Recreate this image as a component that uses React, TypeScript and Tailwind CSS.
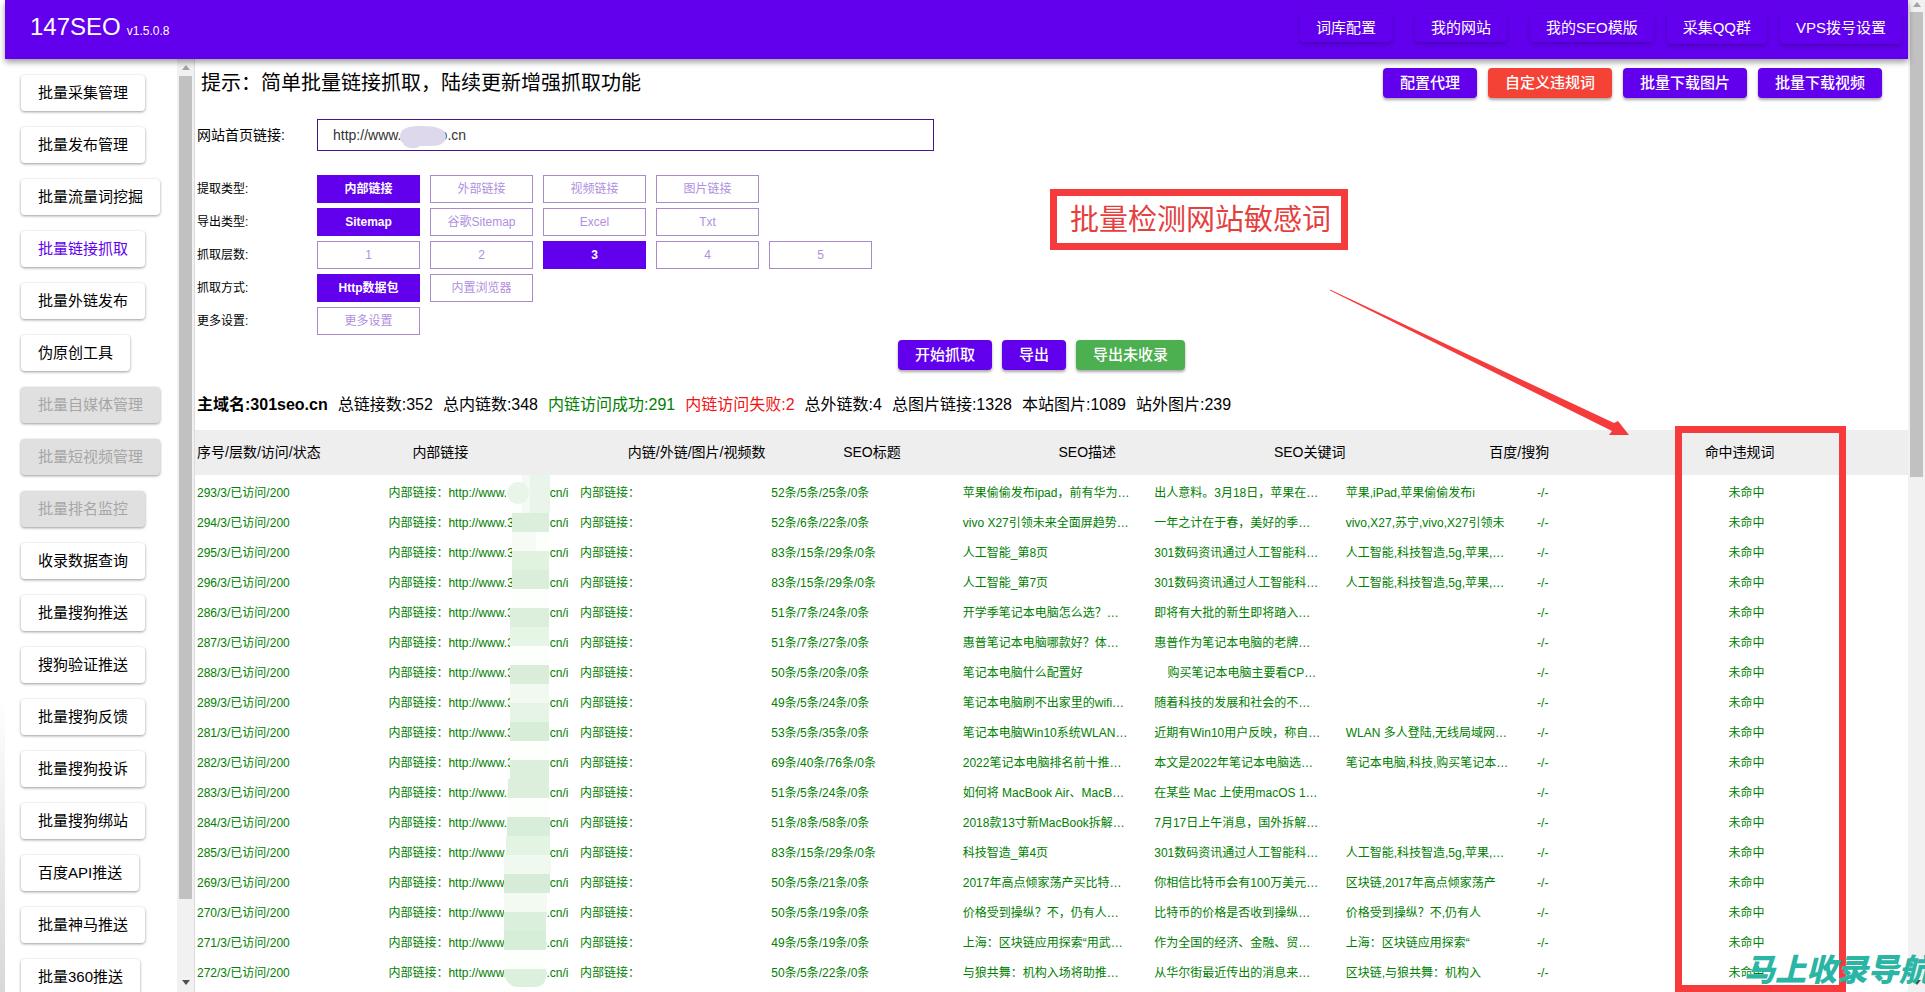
import { useState } from "react";
import clsx from "clsx";

const navItems = [
  { label: "词库配置", className: "h-7 mr-[23px]" },
  { label: "我的网站", className: "h-7 mr-[23px]" },
  { label: "我的SEO模版", className: "h-7 mr-[13px]" },
  { label: "采集QQ群", className: "h-8 mr-[13px]" },
  { label: "VPS拨号设置", className: "h-8" },
];

const menuItems = [
  { label: "批量采集管理" },
  { label: "批量发布管理" },
  { label: "批量流量词挖掘" },
  { label: "批量链接抓取", active: true },
  { label: "批量外链发布" },
  { label: "伪原创工具" },
  { label: "批量自媒体管理", disabled: true },
  { label: "批量短视频管理", disabled: true },
  { label: "批量排名监控", disabled: true },
  { label: "收录数据查询" },
  { label: "批量搜狗推送" },
  { label: "搜狗验证推送" },
  { label: "批量搜狗反馈" },
  { label: "批量搜狗投诉" },
  { label: "批量搜狗绑站" },
  { label: "百度API推送" },
  { label: "批量神马推送" },
  { label: "批量360推送" },
];

const optionGroups = [
  { label: "提取类型:", options: ["内部链接", "外部链接", "视频链接", "图片链接"], selected: "内部链接" },
  { label: "导出类型:", options: ["Sitemap", "谷歌Sitemap", "Excel", "Txt"], selected: "Sitemap" },
  { label: "抓取层数:", options: ["1", "2", "3", "4", "5"], selected: "3" },
  { label: "抓取方式:", options: ["Http数据包", "内置浏览器"], selected: "Http数据包" },
  { label: "更多设置:", options: ["更多设置"], selected: "" },
];

const columns = [
  "序号/层数/访问/状态",
  "内部链接",
  "内链/外链/图片/视频数",
  "SEO标题",
  "SEO描述",
  "SEO关键词",
  "百度/搜狗",
  "命中违规词",
];

// [id, counts, title, description, keywords]
const rows = [
  ["293", "52条/5条/25条/0条", "苹果偷偷发布ipad，前有华为…", "出人意料。3月18日，苹果在…", "苹果,iPad,苹果偷偷发布i"],
  ["294", "52条/6条/22条/0条", "vivo X27引领未来全面屏趋势…", "一年之计在于春，美好的季…", "vivo,X27,苏宁,vivo,X27引领未"],
  ["295", "83条/15条/29条/0条", "人工智能_第8页", "301数码资讯通过人工智能科…", "人工智能,科技智造,5g,苹果,…"],
  ["296", "83条/15条/29条/0条", "人工智能_第7页", "301数码资讯通过人工智能科…", "人工智能,科技智造,5g,苹果,…"],
  ["286", "51条/7条/24条/0条", "开学季笔记本电脑怎么选？…", "即将有大批的新生即将踏入…", ""],
  ["287", "51条/7条/27条/0条", "惠普笔记本电脑哪款好？体…", "惠普作为笔记本电脑的老牌…", ""],
  ["288", "50条/5条/20条/0条", "笔记本电脑什么配置好", "\u00a0\u00a0\u00a0\u00a0购买笔记本电脑主要看CP…", ""],
  ["289", "49条/5条/24条/0条", "笔记本电脑刷不出家里的wifi…", "随着科技的发展和社会的不…", ""],
  ["281", "53条/5条/35条/0条", "笔记本电脑Win10系统WLAN…", "近期有Win10用户反映，称自…", "WLAN 多人登陆,无线局域网…"],
  ["282", "69条/40条/76条/0条", "2022笔记本电脑排名前十推…", "本文是2022年笔记本电脑选…", "笔记本电脑,科技,购买笔记本…"],
  ["283", "51条/5条/24条/0条", "如何将 MacBook Air、MacB…", "在某些 Mac 上使用macOS 1…", ""],
  ["284", "51条/8条/58条/0条", "2018款13寸新MacBook拆解…", "7月17日上午消息，国外拆解…", ""],
  ["285", "83条/15条/29条/0条", "科技智造_第4页", "301数码资讯通过人工智能科…", "人工智能,科技智造,5g,苹果,…"],
  ["269", "50条/5条/21条/0条", "2017年高点倾家荡产买比特…", "你相信比特币会有100万美元…", "区块链,2017年高点倾家荡产"],
  ["270", "50条/5条/19条/0条", "价格受到操纵？不，仍有人…", "比特币的价格是否收到操纵…", "价格受到操纵？不,仍有人"],
  ["271", "49条/5条/19条/0条", "上海：区块链应用探索“用武…", "作为全国的经济、金融、贸…", "上海：区块链应用探索“"],
  ["272", "50条/5条/22条/0条", "与狼共舞：机构入场将助推…", "从华尔街最近传出的消息来…", "区块链,与狼共舞：机构入"],
];

// blocks that hide the domain in the link column: [x, y, width, height, colour]
const mosaic: [number, number, number, number, string][] = [
  [2, 0, 40, 38, "#ffffff"],
  [18, 0, 8, 38, "#f3faf3"],
  [26, 0, 20, 38, "#e9f5e9"],
  [8, 38, 37, 19, "#dcefdc"],
  [8, 57, 37, 19, "#fdfffd"],
  [8, 57, 24, 19, "#f6fbf6"],
  [8, 76, 37, 19, "#e1f2e1"],
  [8, 95, 37, 19, "#daeeda"],
  [8, 114, 37, 19, "#fdfffd"],
  [6, 133, 39, 19, "#dceedc"],
  [6, 152, 39, 19, "#e6f5e6"],
  [6, 171, 39, 19, "#fdfffd"],
  [6, 190, 39, 19, "#d9edd9"],
  [6, 209, 39, 19, "#f1f9f1"],
  [6, 228, 39, 19, "#e6f4e6"],
  [6, 247, 39, 19, "#d8edd8"],
  [6, 266, 39, 19, "#fdfffd"],
  [6, 285, 39, 19, "#dbefdc"],
  [4, 304, 41, 19, "#dbefdc"],
  [4, 323, 41, 19, "#fdfffd"],
  [3, 342, 43, 19, "#d9eddb"],
  [2, 361, 44, 19, "#e4f4e4"],
  [0, 380, 47, 19, "#eff9ef"],
  [0, 399, 46, 19, "#d6ecd9"],
  [0, 418, 43, 19, "#f2faf2"],
  [0, 437, 42, 19, "#dbefdd"],
  [0, 456, 42, 19, "#d6edd8"],
  [0, 475, 42, 19, "#fdfffd"],
];

function ScrollArrow({ down = false, className = "" }: { down?: boolean; className?: string }) {
  return (
    <svg viewBox="0 0 8 5" className={clsx("w-2 h-[5px] shrink-0", className)}>
      <path d={down ? "M0 0h8L4 5z" : "M0 5h8L4 0z"} fill={down ? "#505050" : "#a3a3a3"} />
    </svg>
  );
}

function ActionButton({ label, color = "bg-[#6200ee]" }: { label: string; color?: string }) {
  return (
    <button
      type="button"
      className={clsx(
        "h-[30px] px-[17px] rounded text-white text-[15px] font-medium whitespace-nowrap shadow-[0_2px_3px_rgba(0,0,0,0.35)]",
        color
      )}
    >
      {label}
    </button>
  );
}

function Header() {
  return (
    <header className="relative z-10 flex items-center justify-between h-[59px] shrink-0 pl-[25px] pr-[6px] bg-[#6200ee] text-white shadow-[0_3px_6px_rgba(0,0,0,0.4)]">
      <h1 className="flex items-baseline gap-1.5 text-2xl pb-1.5">
        147SEO <small className="text-xs">v1.5.0.8</small>
      </h1>
      <nav className="flex items-center pb-[3px]">
        {navItems.map((item) => (
          <button
            key={item.label}
            type="button"
            className={clsx(
              "px-4 rounded text-[15px] whitespace-nowrap shadow-[0_2px_4px_rgba(0,0,0,0.25)]",
              item.className
            )}
          >
            {item.label}
          </button>
        ))}
      </nav>
    </header>
  );
}

function Sidebar() {
  return (
    <aside className="flex w-[190px] shrink-0 overflow-hidden">
      <nav className="flex flex-col items-start flex-1 gap-4 pt-4 pl-4">
        {menuItems.map((item) => (
          <button
            key={item.label}
            type="button"
            disabled={item.disabled}
            className={clsx(
              "h-9 shrink-0 px-[17px] rounded text-[15px] whitespace-nowrap shadow-[0_1px_3px_rgba(0,0,0,0.4)]",
              item.disabled ? "bg-[#e0e0e0] text-[#a6a6a6]" : "bg-white",
              item.active ? "text-[#6200ee]" : !item.disabled && "text-black"
            )}
          >
            {item.label}
          </button>
        ))}
      </nav>
      <div className="flex flex-col items-center w-[18px] shrink-0 bg-[#f1f1f1] border-r border-[#dcdcdc]">
        <ScrollArrow className="mt-[6px] mb-[6px]" />
        <div className="flex-1 w-[13px]">
          <div className="h-[91%] bg-[#c1c1c1]" />
        </div>
        <ScrollArrow down className="mb-[7px]" />
      </div>
    </aside>
  );
}

function OptionRow({ label, options, selected }: { label: string; options: string[]; selected: string }) {
  const [value, setValue] = useState(selected);
  return (
    <div role="group" aria-label={label} className="flex items-center">
      <span className="w-[120px] text-xs">{label}</span>
      <div className="flex gap-[10px]">
        {options.map((option) => (
          <button
            key={option}
            type="button"
            aria-pressed={value === option}
            onClick={() => setValue(option)}
            className={clsx(
              "w-[103px] h-7 border text-xs",
              value === option
                ? "bg-[#6200ee] border-[#6200ee] text-white font-bold"
                : "bg-white border-[#a98bc9] text-[#b08fe0]"
            )}
          >
            {option}
          </button>
        ))}
      </div>
    </div>
  );
}

function ResultTable() {
  return (
    <div className="relative">
      <table className="block -mr-3 whitespace-nowrap">
        <thead className="block bg-[#eeeeee] pl-0.5">
          <tr className="grid grid-cols-8 h-[45px] items-center pb-0.5 text-sm">
            {columns.map((column) => (
              <th key={column} className="text-left font-normal">
                {column}
              </th>
            ))}
          </tr>
        </thead>
        <tbody className="block pt-[3px] pl-0.5 text-xs text-[#008000]">
          {rows.map(([id, counts, title, description, keywords]) => (
            <tr key={id} className="grid grid-cols-9 h-[30px] items-center">
              <td>{id}/3/已访问/200</td>
              <td>内部链接：http://www.301seo.cn/i</td>
              <td>内部链接：</td>
              <td>{counts}</td>
              <td>{title}</td>
              <td>{description}</td>
              <td>{keywords}</td>
              <td>-/-</td>
              <td>未命中</td>
            </tr>
          ))}
        </tbody>
      </table>
      {/* Domain mask */}
      <svg viewBox="0 0 47 512" className="absolute top-[45px] left-[309px] w-[47px] h-[512px]">
        {mosaic.map(([x, y, width, height, fill]) => (
          <rect key={x + "-" + y + "-" + width} x={x} y={y} width={width} height={height} fill={fill} />
        ))}
        <circle cx="14" cy="18" r="11" fill="#eaf5ea" />
        <path d="M0 494h42v6q0 12-12 12H14q-10 0-14-12z" fill="#dbf0dd" />
      </svg>
    </div>
  );
}

function Annotations() {
  return (
    <div className="absolute inset-0 z-20 overflow-hidden pointer-events-none">
      <div className="absolute top-[189px] left-[1050px] flex items-center justify-center w-[298px] h-[61px] pt-0.5 pl-[3px] border-[7px] border-[#f53b3b] text-[29px] text-[#e5403d] whitespace-nowrap">
        批量检测网站敏感词
      </div>
      <svg viewBox="0 0 300 148" className="absolute top-[289px] left-[1330px] w-[300px] h-[148px]">
        <path d="M0 0.5L284 134l4-2 11 14h-20l3-4L0 1.5z" fill="#f53b3b" />
      </svg>
      <div className="absolute top-[426px] bottom-0 left-[1675px] w-[171px] border-[7px] border-[#f53b3b]" />
      <div className="absolute bottom-0 left-[1744px] text-[31px] leading-[42px] font-black italic text-[#2ab5a5] whitespace-nowrap">
        马上收录导航
      </div>
    </div>
  );
}

export default function App() {
  const [url, setUrl] = useState("http://www.301seo.cn");

  return (
    <div className="relative flex h-screen overflow-hidden bg-white text-black font-['Liberation_Sans','Noto_Sans_CJK_SC',sans-serif]">
      <div className="w-[5px] shrink-0 bg-linear-to-b from-white from-70% to-[#d8d8d8]" />
      <div className="flex flex-col flex-1 min-w-0">
        <Header />
        <div className="flex flex-1 min-h-0">
          <Sidebar />
          <main className="flex-1 min-w-0 overflow-hidden pt-[9px]">
            <div className="flex items-center justify-between h-[30px] pl-[6px] pr-[26px]">
              <p className="text-xl">提示：简单批量链接抓取，陆续更新增强抓取功能</p>
              <div className="flex gap-[11px]">
                <ActionButton label="配置代理" />
                <ActionButton label="自定义违规词" color="bg-[#f44336]" />
                <ActionButton label="批量下载图片" />
                <ActionButton label="批量下载视频" />
              </div>
            </div>

            <div className="flex items-center mt-[21px] pl-0.5">
              <label htmlFor="site-url" className="w-[120px] text-sm">
                网站首页链接:
              </label>
              <div className="relative">
                <input
                  id="site-url"
                  type="text"
                  value={url}
                  onChange={(e) => setUrl(e.target.value)}
                  className="block w-[617px] h-8 px-[15px] border border-[#4a148c] text-sm text-[#333] outline-none"
                />
                <svg viewBox="0 0 46 24" className="absolute top-[6px] left-[83px] w-[46px] h-6">
                  <path d="M0 12C0 3 8 1 22 1s24 3 24 10-6 10-14 10H20q-4 3-10 2-6-1-7-5-3-1-3-6z" fill="#ddd8ec" />
                </svg>
              </div>
            </div>

            <div className="flex flex-col gap-[5px] mt-6 pl-0.5">
              {optionGroups.map((group) => (
                <OptionRow key={group.label} {...group} />
              ))}
            </div>

            <div className="flex justify-center gap-[10px] mt-[5px] pr-5">
              <ActionButton label="开始抓取" />
              <ActionButton label="导出" />
              <ActionButton label="导出未收录" color="bg-[#4caf50]" />
            </div>

            <div className="flex items-center gap-[10px] h-[50px] mt-[10px] pl-0.5 whitespace-nowrap">
              <strong>主域名:301seo.cn</strong>
              <span>总链接数:352</span>
              <span>总内链数:348</span>
              <span className="text-[#008000]">内链访问成功:291</span>
              <span className="text-[#f01414]">内链访问失败:2</span>
              <span>总外链数:4</span>
              <span>总图片链接:1328</span>
              <span>本站图片:1089</span>
              <span>站外图片:239</span>
            </div>

            <ResultTable />
          </main>
        </div>
      </div>

      {/* Page scrollbar */}
      <div className="flex flex-col items-center w-[17px] shrink-0 bg-[#f1f1f1]">
        <ScrollArrow className="mt-[2px] mb-[5px]" />
        <div className="flex-1 w-[13px]">
          <div className="h-[48%] bg-[#c1c1c1]" />
        </div>
        <ScrollArrow down className="mb-[7px]" />
      </div>

      <Annotations />
    </div>
  );
}
